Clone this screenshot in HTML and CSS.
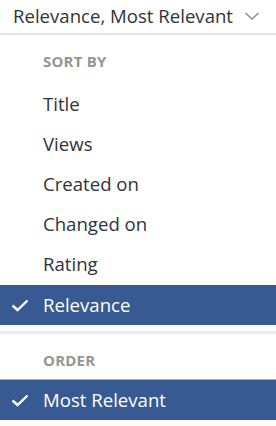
FILE: index.html
```html
<!DOCTYPE html>
<html lang="en">

<head>
    <meta charset="UTF-8">
    <meta name="viewport" content="width=device-width, initial-scale=1.0">
    <title>Sort</title>
    <link rel="stylesheet" href="styles.css">
</head>

<body>
    <div class="select-bar">
        <span class="select-value">Relevance, Most Relevant</span>
        <svg class="chevron" width="16" height="10" viewBox="0 0 16 10">
            <polyline points="1.5,2 8,8 14.5,2" fill="none" stroke="#8a8a8a" stroke-width="1.4" />
        </svg>
    </div>

    <div class="menu">
        <div class="group-label">Sort by</div>
        <div class="option">Title</div>
        <div class="option">Views</div>
        <div class="option">Created on</div>
        <div class="option">Changed on</div>
        <div class="option">Rating</div>
        <div class="option selected">
            <svg class="check" width="18" height="13" viewBox="0 0 18 13">
                <polyline points="1.5,6.5 6.5,11 16.5,1.5" fill="none" stroke="#fff" stroke-width="2.4" />
            </svg>
            Relevance
        </div>

        <div class="divider"></div>

        <div class="group-label order">Order</div>
        <div class="option selected first">
            <svg class="check" width="18" height="13" viewBox="0 0 18 13">
                <polyline points="1.5,6.5 6.5,11 16.5,1.5" fill="none" stroke="#fff" stroke-width="2.4" />
            </svg>
            Most Relevant
        </div>
    </div>
</body>

</html>
```

FILE: styles.css
```css
* {
    margin: 0;
    padding: 0;
    box-sizing: border-box;
    font-family: 'Open Sans', sans-serif;
}

body {
    width: 276px;
    background: #fff;
    color: #30333a;
}

.select-bar {
    height: 35px;
    display: flex;
    align-items: center;
    justify-content: space-between;
    padding: 0 13px 2px 13px;
    border-bottom: 2px solid #e3e3e3;
    font-size: 18.6px;
}

.chevron {
    margin-right: 3px;
    margin-top: 1px;
}

.group-label {
    padding: 19px 0 17px 43px;
    line-height: 14px;
    font-size: 15px;
    font-weight: 700;
    color: #959595;
    text-transform: uppercase;
    letter-spacing: 0.2px;
}

.group-label.order {
    padding-bottom: 12px;
}

.option {
    position: relative;
    height: 40px;
    line-height: 38px;
    padding-left: 43px;
    font-size: 18.6px;
    color: #30333a;
}

.option.selected {
    background-color: #375a93;
    color: #fff;
    line-height: 40px;
}

.option.first {
    border-top: 1px solid #a9b3c4;
    height: 41px;
}

.check {
    position: absolute;
    left: 11px;
    top: 14px;
}

.divider {
    margin-top: 6px;
    height: 3px;
    background: #ececec;
}
```
